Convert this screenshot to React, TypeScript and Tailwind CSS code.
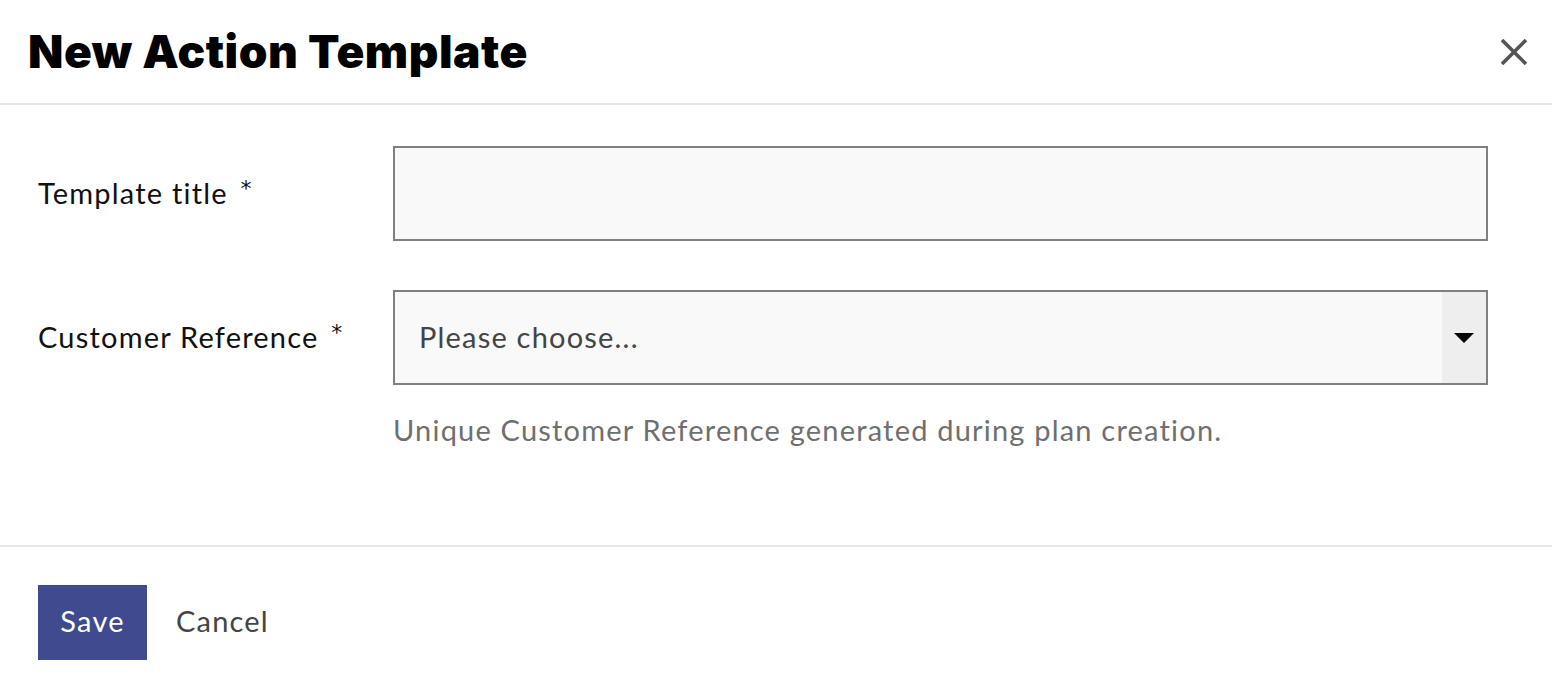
export default function App() {
  return (
    <div className="h-[682px] w-[1552px] bg-white font-['Lato','Noto_Sans',sans-serif] text-[29px] tracking-[1.2px] text-[#111]">
      {/* header */}
      <div className="flex h-[105px] items-center justify-between border-b-2 border-[#e6e6e6] pl-[28px] pr-[24px]">
        <h1 className="font-['Inter',sans-serif] text-[46px] font-black tracking-[0.5px] text-black">
          New Action Template
        </h1>
        <svg width="28" height="28" viewBox="0 0 28 28" className="text-[#555]">
          <path d="M2 2L26 26M26 2L2 26" stroke="currentColor" strokeWidth="3.6" />
        </svg>
      </div>

      {/* body */}
      <div className="flex h-[440px] flex-col gap-[49px] pl-[38px] pr-[64px] pt-[41px]">
        <div className="flex items-center">
          <label className="-mt-[2px] w-[355px]">
            Template title{" "}
            <span className="relative -top-[8px] ml-[4px] font-['DejaVu_Sans',sans-serif] text-[22px]">*</span>
          </label>
          <input className="h-[95px] flex-1 border-2 border-[#808080] bg-[#f9f9f9] px-[24px] outline-none" />
        </div>
        <div className="flex flex-col">
          <div className="flex items-center">
            <label className="-mt-[2px] w-[355px]">
              Customer Reference{" "}
              <span className="relative -top-[8px] ml-[4px] font-['DejaVu_Sans',sans-serif] text-[22px]">*</span>
            </label>
            <div className="flex h-[95px] flex-1 border-2 border-[#808080] bg-[#f9f9f9]">
              <span className="-mt-[2px] flex-1 self-center pl-[24px] text-[#444]">Please choose...</span>
              <div className="flex w-[44px] items-center justify-center bg-[#eeeeee]">
                <svg width="20" height="10" viewBox="0 0 20 10">
                  <path d="M0 0H20L10 10Z" fill="#000" />
                </svg>
              </div>
            </div>
          </div>
          <p className="ml-[355px] mt-[23px] text-[#6f6f6f]">
            Unique Customer Reference generated during plan creation.
          </p>
        </div>
      </div>

      {/* footer */}
      <div className="flex items-center gap-[29px] border-t-2 border-[#e6e6e6] pl-[38px] pt-[38px]">
        <button className="h-[75px] w-[109px] bg-[#404a8f] pb-[3px] text-white">Save</button>
        <button className="pb-[3px] text-[#444]">Cancel</button>
      </div>
    </div>
  )
}
